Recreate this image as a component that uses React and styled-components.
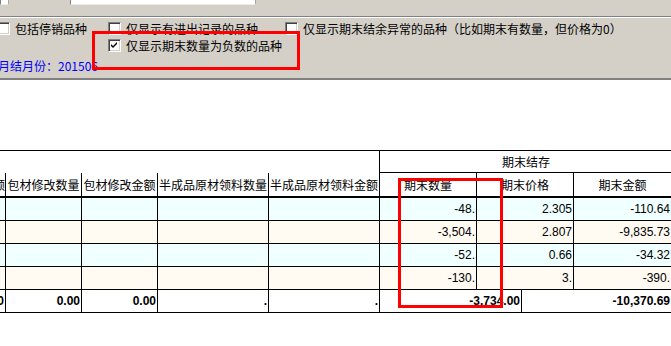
import React from 'react';
import styled, { createGlobalStyle } from 'styled-components';

const CJK = `"Noto Sans CJK SC", "Noto Sans CJK TC", sans-serif`;
const NUM = `"Liberation Sans", Arial, sans-serif`;

const GlobalStyle = createGlobalStyle`
  html, body { margin: 0; padding: 0; background: #fff; overflow: hidden; }
  body { font-family: ${CJK}; font-size: 12px; color: #000; }
`;

const DATA_COLS = [6, 76, 76, 111, 111, 97, 97, 98];
const TOTAL_COLS = [6, 76, 76, 111, 111, 142, 150];

const HEADERS = ['额', '包材修改数量', '包材修改金额', '半成品原材领料数量', '半成品原材领料金额', '期末数量', '期末价格', '期末金额'];

const ROWS = [
  ['-48.', '2.305', '-110.64'],
  ['-3,504.', '2.807', '-9,835.73'],
  ['-52.', '0.66', '-34.32'],
  ['-130.', '3.', '-390.'],
];

const TOTALS = ['0.00', '0.00', '0.00', '.', '.', '-3,734.00', '-10,370.69'];

export default function App() {
  return (
    <Page>
      <GlobalStyle />
      <Panel>
        <InputRow>
          <Field $w={9} />
          <Field $w={186} $ml={61} />
        </InputRow>
        <Divider />
        <Options>
          <Option>
            <Box />
            <span>包括停销品种</span>
          </Option>
          <Option>
            <Box />
            <span>仅显示有进出记录的品种</span>
          </Option>
          <Option>
            <Box />
            <span>仅显示期末结余异常的品种（比如期末有数量，但价格为0）</span>
          </Option>
          <Option $col={2}>
            <Box>
              <svg width="7" height="7" viewBox="0 0 7 7">
                <path d="M0 2 L2 4 L6 0 L6 2 L2 6 L0 4 Z" fill="#000" />
              </svg>
            </Box>
            <span>仅显示期末数量为负数的品种</span>
          </Option>
        </Options>
        <Month>月结月份：201506</Month>
      </Panel>

      <Blank />

      <Grid>
        <GroupRow>
          <GroupGap />
          <GroupCell>期末结存</GroupCell>
        </GroupRow>
        <HeadRow>
          {HEADERS.map((h, i) => (
            <HeadCell key={i} $w={DATA_COLS[i]} $right={i === 0}>{h}</HeadCell>
          ))}
        </HeadRow>
        {ROWS.map((r, ri) => (
          <DataRow key={ri} $bg={ri % 2 === 0 ? '#f0ffff' : '#fffaf2'}>
            {DATA_COLS.map((w, ci) => (
              <NumCell key={ci} $w={w}>{ci >= 5 ? r[ci - 5] : ''}</NumCell>
            ))}
          </DataRow>
        ))}
        <DataRow $bg="#fff" $bold>
          {TOTAL_COLS.map((w, ci) => (
            <NumCell key={ci} $w={w}>{TOTALS[ci]}</NumCell>
          ))}
        </DataRow>
      </Grid>

      <Mark $left={92} $top={31} $w={208} $h={39} />
      <Mark $left={398} $top={178} $w={105} $h={130} />
    </Page>
  );
}

const Page = styled.div`
  position: relative;
  width: 671px;
  height: 346px;
  overflow: hidden;
  background: #fff;
`;

const Panel = styled.div`
  background: #d4d0c8;
  padding-bottom: 4px;
  border-bottom: 2px solid #808080;
`;

const InputRow = styled.div`
  display: flex;
  align-items: flex-start;
  height: 16px;
`;

const Field = styled.div`
  width: ${p => p.$w}px;
  margin-left: ${p => p.$ml || 0}px;
  height: 5px;
  box-sizing: border-box;
  background: #fff;
  border-left: 1px solid #808080;
  border-right: 1px solid #a8a8a8;
  border-bottom: 1px solid #ececec;
`;

const Divider = styled.div`
  border-top: 1px solid #808080;
  border-bottom: 1px solid #fff;
  margin-bottom: 2px;
`;

const Options = styled.div`
  display: grid;
  grid-template-columns: 111px 177px 1fr;
  grid-auto-rows: 17px;
  margin-left: -3px;
`;

const Option = styled.label`
  display: flex;
  align-items: center;
  gap: 5px;
  white-space: nowrap;
  line-height: 17px;
  grid-column: ${p => p.$col || 'auto'};
`;

const Box = styled.span`
  width: 13px;
  height: 13px;
  flex: none;
  box-sizing: border-box;
  background: #fff;
  border: 1px solid;
  border-color: #808080 #fff #fff #808080;
  box-shadow: inset 1px 1px 0 #404040, inset -1px -1px 0 #d4d0c8;
  display: flex;
  align-items: center;
  justify-content: center;
`;

const Month = styled.div`
  margin-top: 4px;
  margin-left: -2px;
  line-height: 16px;
  color: #0000ff;
`;

const Blank = styled.div`
  height: 70px;
`;

const Grid = styled.div`
  width: 672px;
  border-top: 1px solid #000;
  border-bottom: 0;
`;

const GroupRow = styled.div`
  display: flex;
  height: 22px;
`;

const GroupGap = styled.div`
  width: 380px;
  box-sizing: border-box;
  border-right: 1px solid #000;
`;

const GroupCell = styled.div`
  flex: 1;
  border-bottom: 1px solid #000;
  text-align: center;
  line-height: 21px;
`;

const HeadRow = styled.div`
  display: flex;
  height: 25px;
  box-sizing: border-box;
  border-bottom: 2px solid #000;
`;

const HeadCell = styled.div`
  width: ${p => p.$w}px;
  flex: none;
  box-sizing: border-box;
  border-right: 1px solid #000;
  overflow: hidden;
  white-space: nowrap;
  display: flex;
  align-items: center;
  justify-content: ${p => (p.$right ? 'flex-end' : 'center')};
  font-family: ${CJK};
`;

const DataRow = styled.div`
  display: flex;
  height: 23px;
  box-sizing: border-box;
  border-bottom: 1px solid #000;
  background: ${p => p.$bg};
  font-family: ${NUM};
  font-weight: ${p => (p.$bold ? 700 : 400)};
`;

const NumCell = styled.div`
  width: ${p => p.$w}px;
  flex: none;
  box-sizing: border-box;
  border-right: 1px solid #000;
  padding-right: 1px;
  overflow: hidden;
  white-space: nowrap;
  display: flex;
  align-items: center;
  justify-content: flex-end;
`;

const Mark = styled.div`
  position: absolute;
  left: ${p => p.$left}px;
  top: ${p => p.$top}px;
  width: ${p => p.$w}px;
  height: ${p => p.$h}px;
  box-sizing: border-box;
  border: 3px solid #ff0000;
  pointer-events: none;
`;
